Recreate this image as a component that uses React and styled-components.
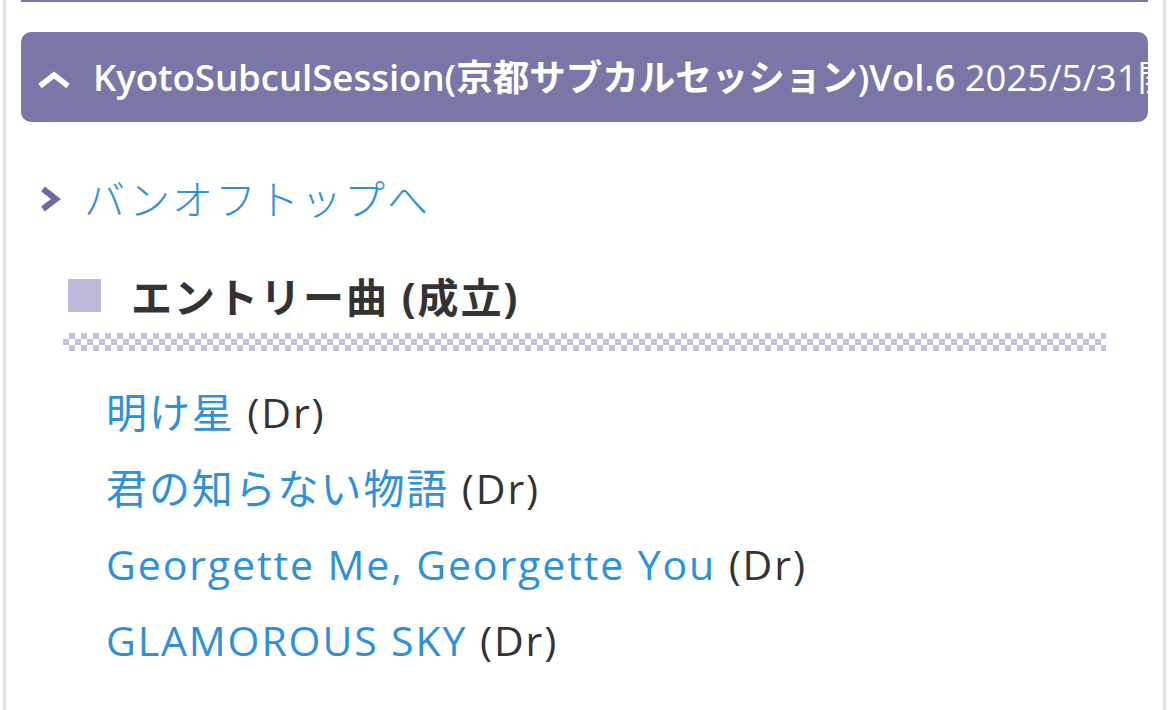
import React from "react";
import styled, { createGlobalStyle } from "styled-components";

const Global = createGlobalStyle`
  html, body { margin: 0; padding: 0; background: #fff; }
  body { font-family: "Open Sans", "Noto Sans CJK JP", sans-serif; }
`;

const Page = styled.div`
  margin-left: 3px;
  width: 1163px;
  min-height: 710px;
  box-sizing: border-box;
  border-left: 3px solid #e2e2e2;
  border-right: 3px solid #e2e2e2;
  padding: 0 15px;
  overflow: hidden;
`;

const TopRule = styled.div`
  height: 2px;
  background: #7b76a8;
`;

const Header = styled.div`
  margin-top: 30px;
  height: 90px;
  border-radius: 10px;
  background: #7b76a8;
  display: flex;
  align-items: center;
  padding-left: 16px;
  gap: 22px;
  overflow: hidden;
  white-space: nowrap;
  color: #fff;
  & > svg { flex: none; margin-top: 4px; }
`;

const HeaderTitle = styled.span`
  font-size: 36.5px;
  font-weight: 600;
  margin-top: -4px;
`;

const HeaderDate = styled.span`
  font-weight: 400;
`;

const LinkRow = styled.a`
  display: flex;
  align-items: center;
  gap: 21px;
  margin: 45px 0 0 18px;
  font-size: 41px;
  letter-spacing: 2px;
  color: #2e90da;
  text-decoration: none;
  font-weight: 300;
  & > svg { flex: none; margin-top: 4px; }
`;

const Heading = styled.h3`
  display: flex;
  align-items: center;
  gap: 30px;
  margin: 46px 0 0 47px;
  font-size: 41px;
  line-height: 48px;
  font-weight: 700;
  color: #333;
  letter-spacing: 2px;
`;

const Square = styled.span`
  width: 33px;
  height: 33px;
  background: #bcb9d9;
  flex: none;
  margin-top: -4px;
`;

const Checker = styled.div`
  margin: 12px 42px 0 42px;
  height: 18px;
  background-color: #fff;
  background-image: repeating-conic-gradient(#c3c0e0 0 25%, #fff 0 50%);
  background-size: 12px 12px;
`;

const List = styled.ul`
  list-style: none;
  margin: 23px 0 0 85px;
  padding: 0;
`;

const Item = styled.li`
  font-size: 41px;
  line-height: 76px;
  letter-spacing: 1.9px;
  color: #333;
`;

const Song = styled.a`
  color: #2e90da;
  text-decoration: none;
`;

const ChevronUp = () => (
  <svg width="34" height="20" viewBox="0 0 34 20">
    <path d="M3 17 L17 6 L31 17" fill="none" stroke="#fff" strokeWidth="5.5" strokeLinejoin="miter" />
  </svg>
);

const ChevronRight = () => (
  <svg width="24" height="28" viewBox="0 0 24 28">
    <path d="M4 4 L17 14 L4 24" fill="none" stroke="#6e69a3" strokeWidth="6" />
  </svg>
);

const songs = [
  "明け星",
  "君の知らない物語",
  "Georgette Me, Georgette You",
  "GLAMOROUS SKY",
];

export default function App() {
  return (
    <>
      <Global />
      <Page>
        <TopRule />
        <Header>
          <ChevronUp />
          <HeaderTitle>
            KyotoSubculSession(京都サブカルセッション)Vol.6{" "}
            <HeaderDate>2025/5/31開催</HeaderDate>
          </HeaderTitle>
        </Header>
        <LinkRow href="#">
          <ChevronRight />
          バンオフトップへ
        </LinkRow>
        <Heading>
          <Square />
          エントリー曲 (成立)
        </Heading>
        <Checker />
        <List>
          {songs.map((s) => (
            <Item key={s}>
              <Song href="#">{s}</Song> (Dr)
            </Item>
          ))}
        </List>
      </Page>
    </>
  );
}
